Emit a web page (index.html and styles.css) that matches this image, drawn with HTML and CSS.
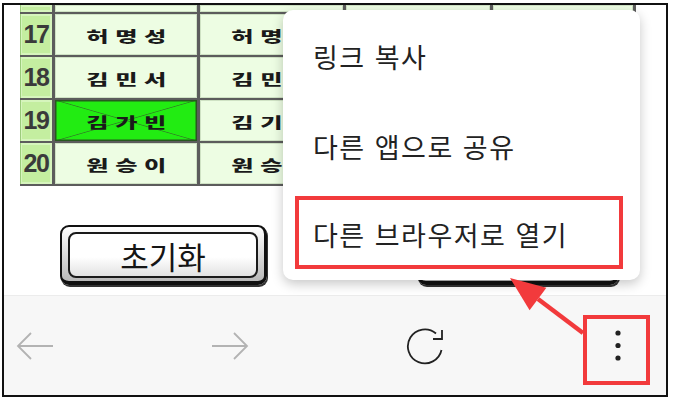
FILE: index.html
```html
<!DOCTYPE html>
<html lang="ko">
<head>
  <meta charset="UTF-8">
  <meta name="viewport" content="width=device-width, initial-scale=1.0">
  <title>다른 브라우저로 열기</title>
  <link rel="stylesheet" href="styles.css">
</head>
<body>
  <div class="frame">
    <!-- Seat table -->
    <div class="sheet">
      <div class="num"></div>
      <div class="cell"></div>
      <div class="cell"></div>
      <div class="cell"></div>
      <div class="cell"></div>

      <div class="num">17</div>
      <div class="cell"><span class="name">허명성</span></div>
      <div class="cell"><span class="name">허명진</span></div>
      <div class="cell"></div>
      <div class="cell"></div>

      <div class="num">18</div>
      <div class="cell"><span class="name">김민서</span></div>
      <div class="cell"><span class="name">김민준</span></div>
      <div class="cell"></div>
      <div class="cell"></div>

      <div class="num">19</div>
      <div class="cell picked"><span class="name">김가빈</span></div>
      <div class="cell"><span class="name">김기현</span></div>
      <div class="cell"></div>
      <div class="cell"></div>

      <div class="num">20</div>
      <div class="cell"><span class="name">원승이</span></div>
      <div class="cell"><span class="name">원승현</span></div>
      <div class="cell"></div>
      <div class="cell"></div>
    </div>

    <!-- Buttons -->
    <div class="actions">
      <button class="btn"><span>초기화</span></button>
      <button class="btn"><span></span></button>
    </div>

    <!-- Browser toolbar -->
    <div class="toolbar">
      <svg class="tool" viewBox="0 0 40 40"><path d="M38 20H3M16 7 3 20l13 13" fill="none" stroke="#b3b3b3" stroke-width="1.8"/></svg>
      <svg class="tool" viewBox="0 0 40 40"><path d="M2 20h35M24 7l13 13-13 13" fill="none" stroke="#b3b3b3" stroke-width="1.8"/></svg>
      <svg class="tool" viewBox="0 0 40 40"><path d="M31 7.5A17 17 0 1 0 36.5 24" fill="none" stroke="#222" stroke-width="1.8"/><path d="M37 4v9h-9" fill="none" stroke="#222" stroke-width="1.8"/></svg>
      <svg class="tool" viewBox="0 0 40 40"><circle cx="20" cy="7" r="2.6" fill="#222"/><circle cx="20" cy="19.5" r="2.6" fill="#222"/><circle cx="20" cy="32" r="2.6" fill="#222"/></svg>
    </div>

    <!-- Overflow menu -->
    <div class="menu">
      <div class="menu-item">링크 복사</div>
      <div class="menu-item">다른 앱으로 공유</div>
      <div class="menu-item marked"><span class="mark">다른 브라우저로 열기</span></div>
    </div>

    <!-- Annotation -->
    <div class="callout"></div>
    <svg class="pointer" viewBox="0 0 90 65">
      <path d="M79 58 34 24" stroke="#f23a3c" stroke-width="4.5"/>
      <polygon points="6,3 42.4,12.8 25.6,35.2" fill="#f23a3c"/>
    </svg>
  </div>
</body>
</html>
```

FILE: styles.css
```css
body {
  margin: 0;
  background: #fff;
  font-family: "Noto Sans CJK KR", "Noto Sans", sans-serif;
}
.frame {
  position: relative;
  margin: 3px 0 0 2px;
  width: 662px;
  height: 390px;
  border: 2px solid #111;
  overflow: hidden;
  display: flex;
  flex-direction: column;
  background: #fff;
}
.sheet {
  display: grid;
  grid-template-columns: 32px 142px 143px 144px 140px;
  grid-template-rows: 7px 41px 41px 41px 41px;
  column-gap: 3px;
  row-gap: 2px;
  width: fit-content;
  margin-left: 16px;
  padding: 0 3px 2px 0;
  background: #5c5c5c;
}
.num {
  display: flex;
  align-items: center;
  justify-content: center;
  background: #c4eea0;
  box-shadow: inset 1px 0 0 #9ccb7c, inset 0 0 0 2px #d6f5bd;
  font-family: "Liberation Sans", Arial, sans-serif;
  font-weight: bold;
  font-size: 25px;
  letter-spacing: -1.5px;
  color: #3a3a3a;
}
.cell {
  display: flex;
  align-items: center;
  justify-content: center;
  background: #edfde3;
  box-shadow: inset 0 0 0 1px #cfe2c4;
}
.name {
  display: inline-block;
  padding-left: 6px;
  font-size: 22px;
  font-weight: 900;
  letter-spacing: 6px;
  color: #1a1a1a;
  transform: scale(1.1, 0.66);
}
.cell.picked {
  background:
    linear-gradient(to top right, transparent calc(50% - 0.8px), #2f8a24 50%, transparent calc(50% + 0.8px)),
    linear-gradient(to bottom right, transparent calc(50% - 0.8px), #2f8a24 50%, transparent calc(50% + 0.8px)),
    #22ec12;
  box-shadow: inset 0 0 0 1.5px #275a1f;
}
.actions {
  display: flex;
  gap: 150px;
  margin: 39px 0 0 56px;
}
.btn {
  width: 207px;
  height: 60px;
  padding: 5px 6px 7px 6px;
  border: 2px solid #111;
  border-bottom-width: 4px;
  border-right-width: 3px;
  border-radius: 9px;
  background: linear-gradient(#ffffff, #b9b9b9);
  box-shadow: 1px 2px 0 #333;
  font-family: "Noto Sans CJK KR", sans-serif;
}
.btn:last-child {
  width: 202px;
}
.btn span {
  display: flex;
  align-items: center;
  justify-content: center;
  height: 100%;
  border: 2px solid #1a1a1a;
  border-radius: 8px;
  background: linear-gradient(#ffffff 55%, #e2e2e2);
  font-size: 31px;
  color: #151515;
  line-height: 1;
}
.toolbar {
  margin-top: auto;
  height: 99px;
  border-top: 1px solid #ececec;
  background: #f7f7f7;
  display: flex;
  align-items: center;
  gap: 155px;
  padding-left: 11px;
}
.tool {
  width: 40px;
  height: 40px;
  flex: none;
}
.tool:last-child {
  margin-left: -2px;
}
.menu {
  position: absolute;
  left: 279px;
  top: 5px;
  width: 357px;
  height: 270px;
  background: #fff;
  border-radius: 10px;
  box-shadow: 0 4px 12px rgba(0, 0, 0, 0.22);
  display: flex;
  flex-direction: column;
}
.menu-item {
  box-sizing: border-box;
  height: 90px;
  flex: none;
  display: flex;
  align-items: center;
  padding: 2px 0 0 30px;
  font-size: 27px;
  letter-spacing: 1.5px;
  color: #222;
}
.menu-item.marked {
  padding: 6px 17px 11px 12px;
  align-items: stretch;
}
.mark {
  flex: 1;
  display: flex;
  align-items: center;
  padding: 4px 0 0 14px;
  border: 4px solid #f23a3c;
}
.callout {
  position: absolute;
  left: 579px;
  top: 310px;
  width: 59px;
  height: 62px;
  border: 4px solid #f23a3c;
}
.pointer {
  position: absolute;
  left: 500px;
  top: 270px;
  width: 90px;
  height: 65px;
}
```
